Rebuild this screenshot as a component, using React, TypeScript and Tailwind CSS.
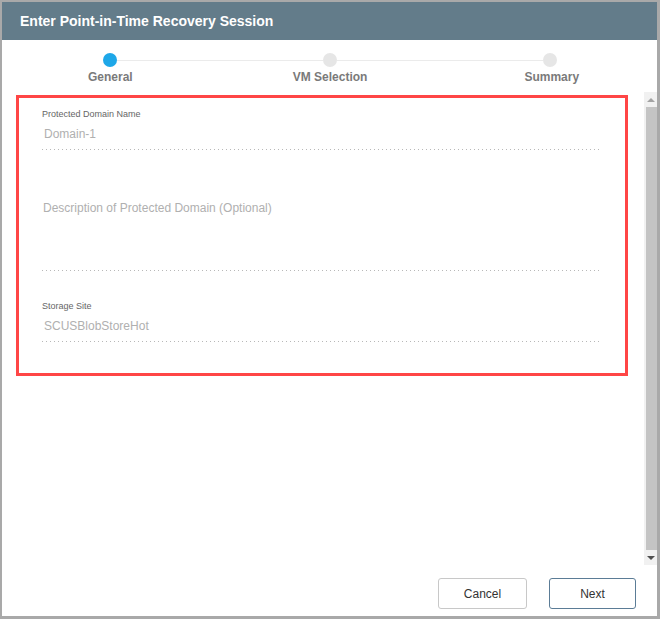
const FONT = { fontFamily: '"Liberation Sans", Arial, sans-serif' };

const steps = [
  { label: "General", active: true, offset: "ml-[86px]" },
  { label: "VM Selection", active: false, offset: "ml-[160px]" },
  { label: "Summary", active: false, offset: "ml-[157px]" },
];

function Dotted({ className = "" }: { className?: string }) {
  return (
    <div
      className={`h-px bg-[linear-gradient(to_right,#b8b8b8_1px,transparent_1px)] bg-[length:4px_1px] bg-repeat-x ${className}`}
    />
  );
}

function Stepper() {
  return (
    <div className="h-[52px] shrink-0 pt-[13px]">
      <div className="flex items-center pl-[101px] pr-[100px]">
        {steps.map((s, i) => (
          <div key={s.label} className={`flex items-center ${i < steps.length - 1 ? "flex-1" : ""}`}>
            <span
              className={`h-[14px] w-[14px] shrink-0 rounded-full ${s.active ? "bg-[#1ea7e8]" : "bg-[#e6e6e6]"}`}
            />
            {i < steps.length - 1 && <span className="h-px flex-1 bg-[#ebebeb]" />}
          </div>
        ))}
      </div>
      <div className="mt-[3px] flex">
        {steps.map((s) => (
          <div key={s.label} className={`${s.offset} text-[12px] font-bold leading-[14px] text-[#7a7a7a]`}>
            {s.label}
          </div>
        ))}
      </div>
    </div>
  );
}

function Scrollbar() {
  return (
    <div className="flex w-[13px] shrink-0 flex-col bg-[#f1f1f1]">
      <div className="flex h-[15px] items-center justify-center">
        <span className="h-0 w-0 border-x-[4px] border-b-[4px] border-x-transparent border-b-[#a3a3a3]" />
      </div>
      <div className="ml-[2px] flex-1 bg-[#c4c4c4]" />
      <div className="flex h-[15px] items-center justify-center">
        <span className="h-0 w-0 border-x-[4px] border-t-[4px] border-x-transparent border-t-[#505050]" />
      </div>
    </div>
  );
}

function Form() {
  return (
    <div className="w-[612px] border-[3px] border-[#ff4646] pb-[31px] pl-[23px] pr-[26px] pt-[11px]">
      <div className="text-[9px] leading-[11px] text-[#666]">Protected Domain Name</div>
      <div className="mt-[7px] pl-[2px] text-[12px] leading-[14px] text-[#b0b0b0]">Domain-1</div>
      <Dotted className="mt-[8px]" />

      <div className="mt-[51px] pl-[1px] text-[12px] leading-[14px] text-[#b0b0b0]">
        Description of Protected Domain (Optional)
      </div>
      <Dotted className="mt-[55px]" />

      <div className="mt-[30px] text-[9px] leading-[11px] text-[#666]">Storage Site</div>
      <div className="mt-[7px] pl-[2px] text-[12px] leading-[14px] text-[#b0b0b0]">SCUSBlobStoreHot</div>
      <Dotted className="mt-[8px]" />
    </div>
  );
}

export default function App() {
  return (
    <div
      className="h-[619px] w-[660px] bg-[#a9a9a9] pb-[3px] pl-[2px] pr-[3px] pt-[2px]"
      style={FONT}
    >
      <div className="flex h-full flex-col bg-white">
        <div className="flex h-[38px] shrink-0 items-center bg-[#637c8a] px-[18px]">
          <h1 className="text-[14px] font-bold text-white">Enter Point-in-Time Recovery Session</h1>
        </div>

        <Stepper />

        <div className="flex min-h-0 flex-1">
          <div className="flex-1 pl-[14px] pt-[3px]">
            <Form />
          </div>
          <Scrollbar />
        </div>

        <div className="flex h-[51px] shrink-0 items-start justify-end gap-[22px] pr-[21px] pt-[13px]">
          <button className="h-[31px] w-[89px] rounded-[3px] border border-[#c8c8c8] bg-white text-[12px] text-[#333]">
            Cancel
          </button>
          <button className="h-[31px] w-[87px] rounded-[3px] border border-[#5b7c96] bg-white text-[12px] text-[#333]">
            Next
          </button>
        </div>
      </div>
    </div>
  );
}
